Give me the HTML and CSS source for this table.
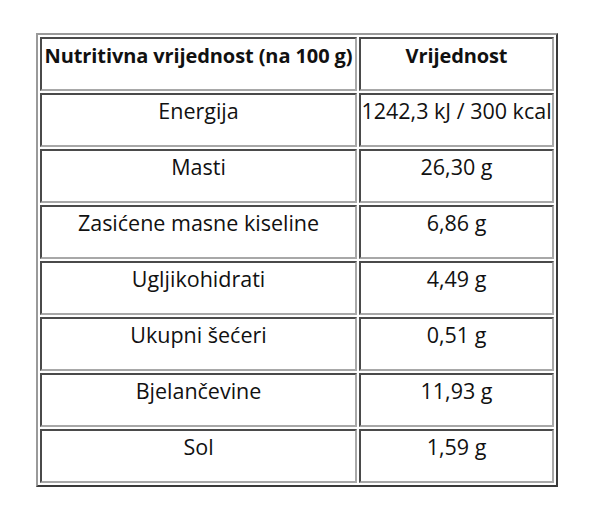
FILE: index.html
```html
<!DOCTYPE html>
<html lang="hr">
<head>
<meta charset="utf-8">
<link rel="stylesheet" href="styles.css">
</head>
<body>
<table class="nutri">
  <tr><th class="c1">Nutritivna vrijednost (na 100 g)</th><th class="c2">Vrijednost</th></tr>
  <tr><td>Energija</td><td>1242,3 kJ / 300 kcal</td></tr>
  <tr><td>Masti</td><td>26,30 g</td></tr>
  <tr><td>Zasićene masne kiseline</td><td>6,86 g</td></tr>
  <tr><td>Ugljikohidrati</td><td>4,49 g</td></tr>
  <tr><td>Ukupni šećeri</td><td>0,51 g</td></tr>
  <tr><td>Bjelančevine</td><td>11,93 g</td></tr>
  <tr><td>Sol</td><td>1,59 g</td></tr>
</table>
</body>
</html>
```
FILE: styles.css
```css
html, body {
  margin: 0;
  background: #fff;
}
body {
  padding: 33px 0 0 36px;
  font-family: "Open Sans", "Liberation Sans", sans-serif;
  color: #111;
}
.nutri {
  border-collapse: separate;
  border-spacing: 2px;
  border-style: solid;
  border-width: 2px;
  border-color: #9a9a9a #3a3a3a #3a3a3a #9a9a9a;
  table-layout: fixed;
  width: 522px;
}
.nutri th, .nutri td {
  box-sizing: border-box;
  height: 54px;
  padding: 1px 0 0;
  border-style: solid;
  border-width: 2px;
  border-color: #4a4a4a #a8a8a8 #a8a8a8 #4a4a4a;
  text-align: center;
  vertical-align: top;
  font-size: 21.5px;
  line-height: 29px;
  white-space: nowrap;
  overflow: visible;
}
.nutri th {
  font-weight: 700;
  font-size: 20px;
  letter-spacing: -0.1px;
  padding-top: 2px;
}
.c1 { width: 317px; }
.c2 { width: 195px; }
```
